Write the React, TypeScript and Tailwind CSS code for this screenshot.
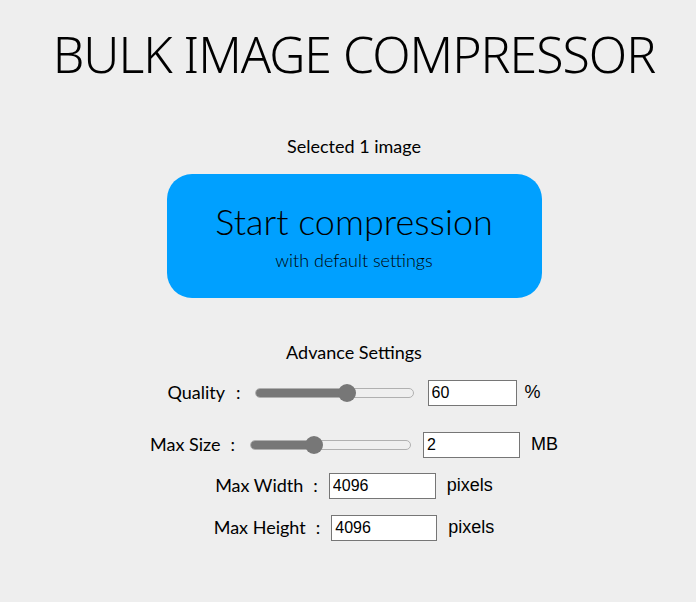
type SliderProps = { pct: number; w: string };

function Slider({ pct, w }: SliderProps) {
  return (
    <div className={`relative h-[18px] flex items-center ${w}`}>
      <div className="h-[10px] w-full rounded-full border border-[#b0b0b0] bg-[#efefef] overflow-hidden">
        <div className="h-full bg-[#777777]" style={{ width: `${pct}%` }} />
      </div>
      <div
        className="absolute top-0 h-[18px] w-[18px] rounded-full bg-[#777777] -translate-x-1/2"
        style={{ left: `${pct}%` }}
      />
    </div>
  );
}

function NumBox({ value, w }: { value: string; w: string }) {
  return (
    <input
      readOnly
      value={value}
      className={`${w} h-[26px] border border-[#767676] bg-white px-[3px] text-[16px] text-black font-['Liberation_Sans',Arial,sans-serif] outline-none`}
    />
  );
}

const unit = "text-[18px] font-['Liberation_Sans',Arial,sans-serif]";

export default function App() {
  return (
    <div className="min-h-[602px] w-full bg-[#eeeeee] text-black font-['Lato',sans-serif] pl-[12px] flex flex-col items-center">
      <h1 className="mt-[22px] text-[50px] leading-[64px] font-light tracking-[-1px] font-['Noto_Sans',sans-serif]">
        BULK IMAGE COMPRESSOR
      </h1>

      <p className="mt-[48px] text-[18px] leading-[24px]">Selected 1 image</p>

      <button className="mt-[16px] w-[375px] h-[124px] rounded-[25px] bg-[#00a0ff] flex flex-col items-center justify-center">
        <span className="text-[36px] leading-[42px] font-light">Start compression</span>
        <span className="mt-[6px] text-[18px] leading-[24px] font-light">with default settings</span>
      </button>

      <p className="mt-[42px] text-[18px] leading-[24px]">Advance Settings</p>

      <div className="mt-[15px] flex items-center">
        <span className="text-[18px]">Quality</span>
        <span className="text-[18px] ml-[11px] mr-[14px]">:</span>
        <Slider pct={58} w="w-[159px]" />
        <div className="ml-[14px]"><NumBox value="60" w="w-[89px]" /></div>
        <span className={`ml-[8px] ${unit}`}>%</span>
      </div>

      <div className="mt-[25px] flex items-center">
        <span className="text-[18px]">Max Size</span>
        <span className="text-[18px] ml-[10px] mr-[15px]">:</span>
        <Slider pct={40} w="w-[161px]" />
        <div className="ml-[12px]"><NumBox value="2" w="w-[97px]" /></div>
        <span className={`ml-[11px] ${unit}`}>MB</span>
      </div>

      <div className="mt-[14px] flex items-center">
        <span className="text-[18px]">Max Width</span>
        <span className="text-[18px] ml-[10px] mr-[11px]">:</span>
        <NumBox value="4096" w="w-[107px]" />
        <span className={`ml-[11px] ${unit}`}>pixels</span>
      </div>

      <div className="mt-[15px] flex items-center">
        <span className="text-[18px]">Max Height</span>
        <span className="text-[18px] ml-[10px] mr-[11px]">:</span>
        <NumBox value="4096" w="w-[106px]" />
        <span className={`ml-[11px] ${unit}`}>pixels</span>
      </div>
    </div>
  );
}
